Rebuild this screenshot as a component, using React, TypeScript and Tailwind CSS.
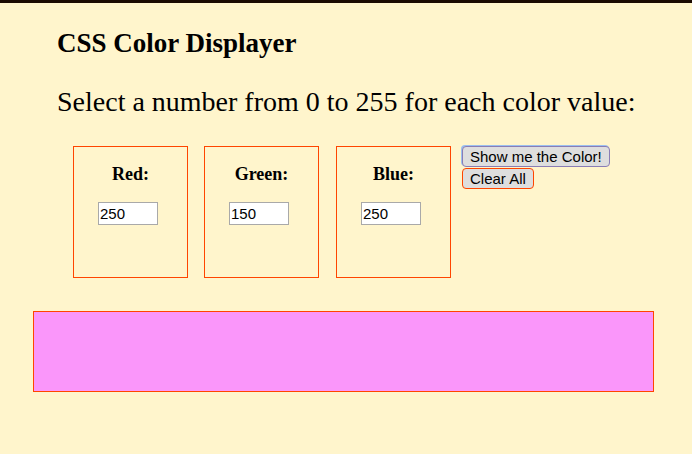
import React from "react";

const serif = { fontFamily: '"Liberation Serif", "Times New Roman", serif' };
const sans = { fontFamily: '"Liberation Sans", Arial, sans-serif' };

function ColorBox({ label, value }: { label: string; value: string }) {
  return (
    <div className="w-[115px] h-[132px] border border-[#ff4500] flex flex-col">
      <div className="mt-[17px] text-center text-[18px] leading-[20px] font-bold text-black" style={serif}>
        {label}
      </div>
      <div className="mt-[17px] ml-[24px]">
        <input
          readOnly
          value={value}
          className="w-[60px] h-[23px] border border-[#a9a9a9] bg-white px-[1px] text-[15px] leading-[17px] text-black outline-none"
          style={sans}
        />
      </div>
    </div>
  );
}

export default function App() {
  return (
    <div className="min-h-[454px] w-full bg-[#fff5cc]">
      <div className="h-[3px] bg-[#1a0a00]" />
      <h2 className="pl-[57px] pt-[24px] text-[27px] leading-[32px] font-bold text-black" style={serif}>
        CSS Color Displayer
      </h2>
      <p className="pl-[57px] mt-[27px] text-[28px] leading-[32px] text-black" style={serif}>
        Select a number from 0 to 255 for each color value:
      </p>
      <div className="flex items-start pl-[73px] mt-[28px]">
        <div className="flex gap-[16px]">
          <ColorBox label="Red:" value="250" />
          <ColorBox label="Green:" value="150" />
          <div className="ml-[1px]">
            <ColorBox label="Blue:" value="250" />
          </div>
        </div>
        <div className="ml-[11px] flex flex-col items-start gap-[1px]" style={sans}>
          <button className="h-[21px] px-[7px] border border-[#8a7db5] rounded-[4px] bg-[#dedede] text-[15px] leading-[17px] text-black shadow-[-1px_-1px_0_#9cc0f0]">
            Show me the Color!
          </button>
          <button className="h-[21px] px-[7px] border border-[#ff4500] rounded-[4px] bg-[#dedede] text-[15px] leading-[17px] text-black">
            Clear All
          </button>
        </div>
      </div>
      <div className="ml-[33px] mt-[33px] w-[621px] h-[81px] border border-[#ff4500] bg-[#fa96fa]" />
    </div>
  );
}
